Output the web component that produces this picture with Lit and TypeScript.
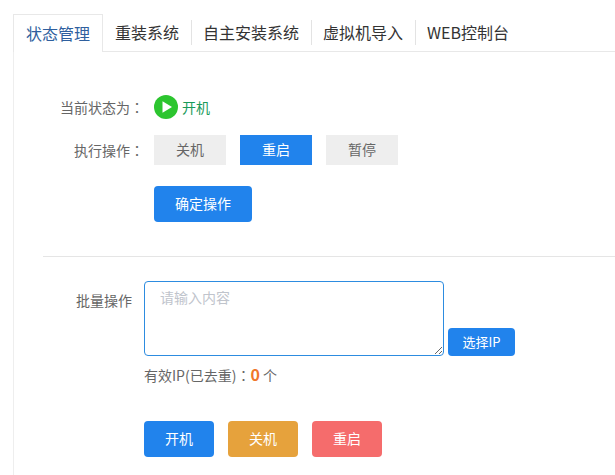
import { LitElement, css, html } from 'lit';
import { customElement, state } from 'lit/decorators.js';
import { classMap } from 'lit/directives/class-map.js';

const TABS = ['状态管理', '重装系统', '自主安装系统', '虚拟机导入', 'WEB控制台'];
const ACTIONS = ['关机', '重启', '暂停'];

@customElement('app-root')
export class AppRoot extends LitElement {
	@state() private tab = 0;
	@state() private action = 1;

	static styles = css`
    :host {
      display: flex;
      flex-direction: column;
      height: 100vh;
      box-sizing: border-box;
      padding: 14px 0 0 13px;
      font-family: "Noto Sans CJK SC", "Liberation Sans", sans-serif;
      font-size: 14px;
      color: #666;
      background: #fff;
      overflow: hidden;
    }

    .tabs {
      display: flex;
      flex: none;
      height: 38px;
      box-sizing: border-box;
      border-bottom: 1px solid #e8e8e8;
    }

    .tab {
      position: relative;
      height: 38px;
      box-sizing: border-box;
      padding: 0 12px;
      font-size: 16px;
      line-height: 37px;
      color: #333;
      cursor: pointer;
    }

    .tab + .tab::before {
      content: '';
      position: absolute;
      left: 0;
      top: 6px;
      height: 25px;
      border-left: 1px solid #e3e3e3;
    }

    .tab.active {
      color: #2f5f9e;
      background: #fff;
      border: 1px solid #e8e8e8;
      border-bottom: 0;
    }

    .tab.active + .tab::before {
      display: none;
    }

    .panel {
      flex: 1;
      border-left: 1px solid #eee;
      padding-top: 43px;
    }

    .row {
      display: flex;
      align-items: center;
      padding-left: 46px;
    }

    .row + .row {
      margin-top: 16px;
    }

    .label {
      width: 84px;
      margin-right: 10px;
      text-align: right;
      line-height: 20px;
      white-space: nowrap;
    }

    /* TC glyph sits centred in its cell, as in the reference */
    .colon {
      font-family: "Noto Sans CJK TC", sans-serif;
    }

    .status {
      display: flex;
      align-items: center;
      gap: 4px;
      height: 24px;
      color: #1a9a5a;
    }

    .status svg {
      display: block;
    }

    .choices {
      display: flex;
      gap: 14px;
    }

    .choice {
      width: 72px;
      height: 30px;
      border: 0;
      padding: 0 0 2px;
      font: inherit;
      background: #eee;
      color: #666;
      cursor: pointer;
    }

    .choice.on {
      background: #2183ec;
      color: #fff;
    }

    .btn {
      height: 36px;
      border: 0;
      border-radius: 4px;
      padding: 0 0 2px;
      font: inherit;
      color: #fff;
      background: #2183ec;
      cursor: pointer;
    }

    .confirm {
      width: 98px;
      margin: 21px 0 0 140px;
      display: block;
    }

    hr {
      height: 1px;
      margin: 34px 0 24px 29px;
      border: 0;
      background: #e5e5e5;
    }

    .bulk {
      display: grid;
      grid-template-columns: 118px auto;
      padding-left: 12px;
    }

    .bulk-label {
      width: 118px;
      padding: 9px 12px 0 0;
      box-sizing: border-box;
      text-align: right;
      line-height: 20px;
    }

    .input-row {
      display: flex;
      align-items: flex-end;
      gap: 4px;
    }

    textarea {
      display: block;
      width: 300px;
      height: 75px;
      box-sizing: border-box;
      padding: 4px 15px;
      border: 1px solid #2d8ce0;
      border-radius: 4px;
      outline: 0;
      font: inherit;
      line-height: 22px;
      color: #666;
    }

    textarea::placeholder {
      color: #c0c4cc;
    }

    .pick {
      width: 67px;
      height: 28px;
      font-size: 13px;
    }

    .count {
      height: 20px;
      margin-top: 9px;
      line-height: 20px;
    }

    .count b {
      font-size: 16px;
      line-height: 1;
      color: #f0772b;
      font-weight: 700;
    }

    .actions {
      display: flex;
      gap: 14px;
      margin-top: 36px;
    }

    .actions .btn {
      width: 70px;
    }

    .actions .off {
      background: #e6a23c;
    }

    .actions .reboot {
      background: #f56c6c;
    }
  `;

	render() {
		return html`
      <div class="tabs">
        ${TABS.map((name, i) => html`
          <div class=${classMap({ tab: true, active: i === this.tab })} @click=${() => (this.tab = i)}>${name}</div>
        `)}
      </div>

      <div class="panel">
        <div class="row">
          <span class="label">当前状态为<span class="colon">：</span></span>
          <span class="status">
            <svg width="24" height="24" viewBox="0 0 24 24">
              <circle cx="12" cy="12" r="12" fill="#2cc52f"></circle>
              <path d="M8.5 6.2 L18 12 L8.5 17.8 Z" fill="#fff"></path>
            </svg>
            开机
          </span>
        </div>

        <div class="row">
          <span class="label">执行操作<span class="colon">：</span></span>
          <div class="choices">
            ${ACTIONS.map((name, i) => html`
              <button class=${classMap({ choice: true, on: i === this.action })} @click=${() => (this.action = i)}>${name}</button>
            `)}
          </div>
        </div>

        <button class="btn confirm">确定操作</button>

        <hr />

        <div class="bulk">
          <div class="bulk-label">批量操作</div>
          <div>
            <div class="input-row">
              <textarea placeholder="请输入内容"></textarea>
              <button class="btn pick">选择IP</button>
            </div>
            <div class="count">有效IP(已去重)<span class="colon">：</span><b>0</b> 个</div>
            <div class="actions">
              <button class="btn">开机</button>
              <button class="btn off">关机</button>
              <button class="btn reboot">重启</button>
            </div>
          </div>
        </div>
      </div>
    `;
	}
}
